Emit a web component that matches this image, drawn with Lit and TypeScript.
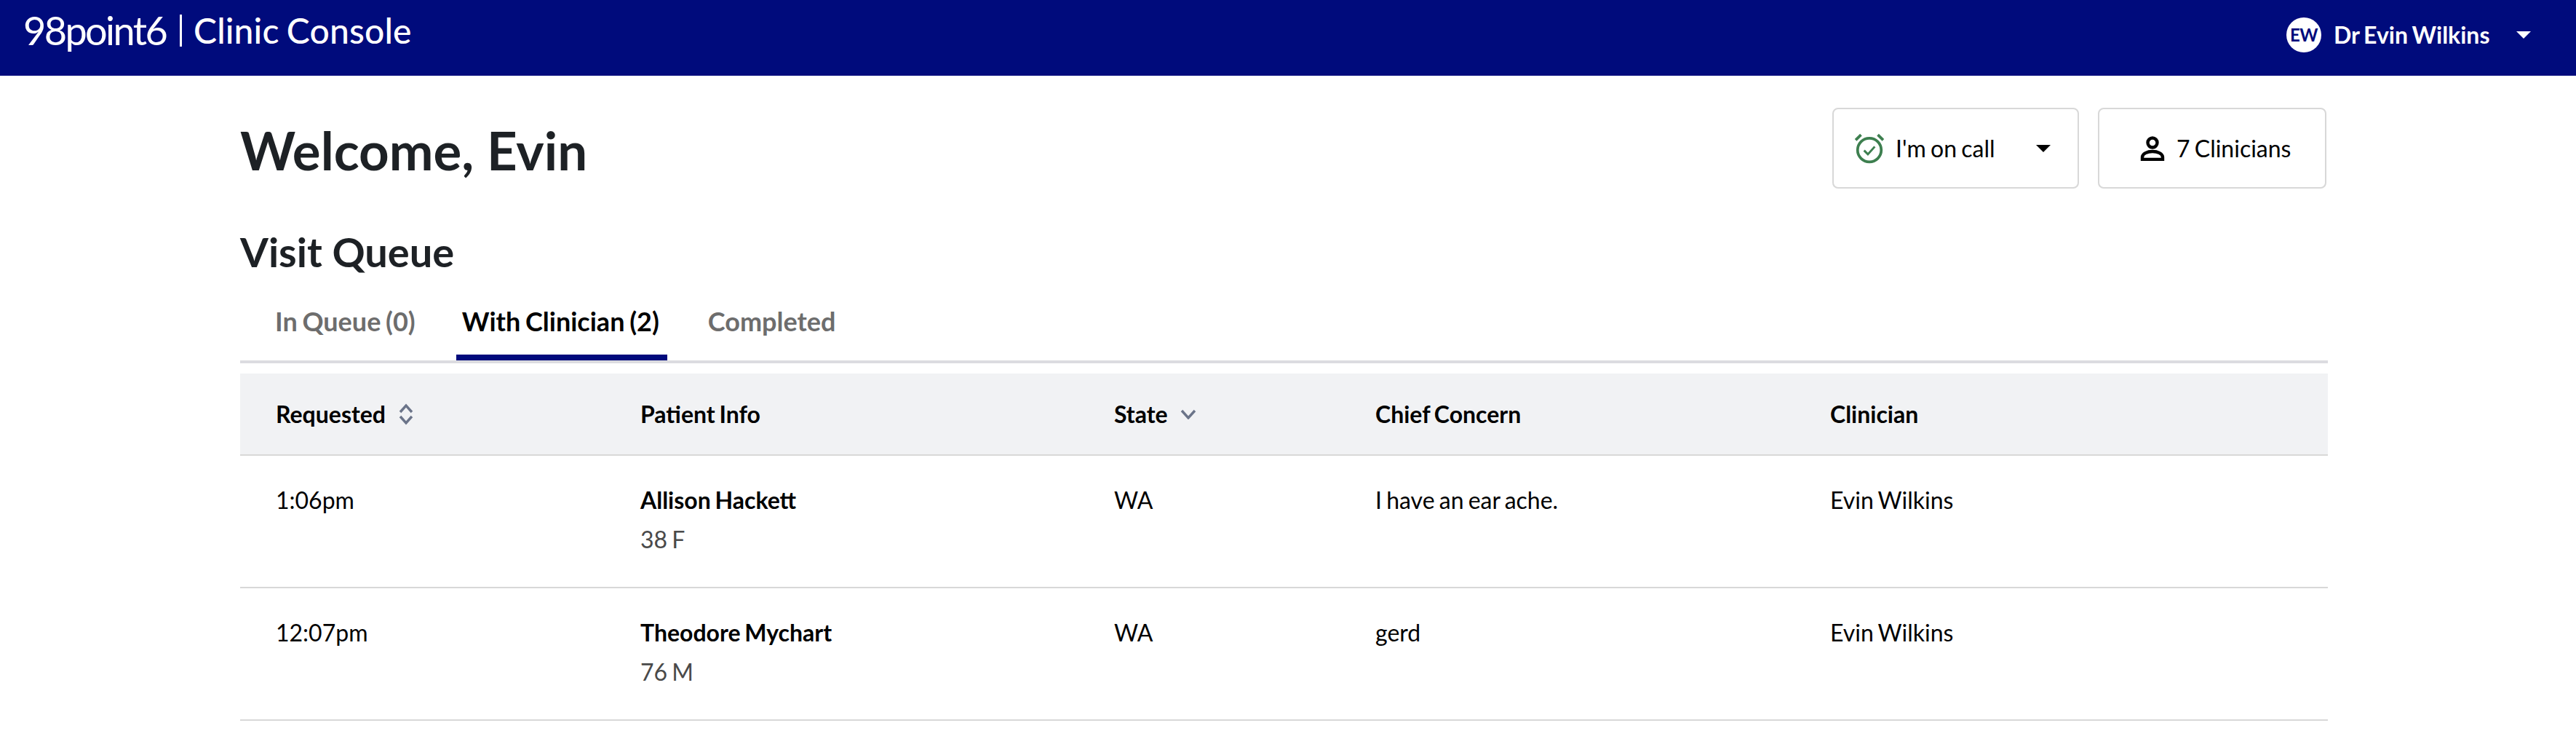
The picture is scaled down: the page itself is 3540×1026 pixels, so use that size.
import { LitElement, html, css, svg } from "lit";
import { customElement } from "lit/decorators.js";

const caret = svg`<path d="M0 0h20L10 10z" fill="currentColor"/>`;

@customElement("app-root")
export class AppRoot extends LitElement {
  static styles = css`
    :host { display: block; font-family: Lato, "Liberation Sans", sans-serif; color: #000; background: #fff; min-height: 1026px; font-size: 32px; line-height: 48px; word-spacing: -2px; }
    .top { height: 104px; background: #000b7c; color: #fff; display: flex; align-items: center; justify-content: space-between; }
    .brand { display: flex; align-items: center; padding-left: 32px; margin-top: -20px; }
    .logo { font-size: 54px; font-weight: 400; letter-spacing: -2.6px; line-height: 56px; width: 196px; }
    .bar { width: 3px; height: 44px; background: #fff; margin: 0 17px 0 19px; }
    .product { font-size: 48px; font-weight: 500; line-height: 56px; letter-spacing: 0.15px; margin-left: -1px; }
    .user { display: flex; align-items: center; padding-right: 62px; font-weight: 700; margin-top: -8px; }
    .avatar { width: 48px; height: 48px; border-radius: 50%; background: #fff; color: #000b7c; font-size: 24px; font-weight: 700; display: flex; align-items: center; justify-content: center; margin-right: 17px; letter-spacing: -0.5px; }
    .name { width: 251px; }
    .user svg { display: block; width: 20px; height: 10px; }
    main { padding: 0 341px 0 330px; }
    .head { display: flex; justify-content: space-between; align-items: center; padding-top: 48px; }
    h1 { margin: 0; font-size: 72.6px; line-height: 96px; font-weight: 700; color: #1d2125; word-spacing: 0; }
    .actions { display: flex; gap: 26px; margin: -4px 2px 0 0; }
    .btn { box-sizing: border-box; height: 111px; border: 2px solid #d8d8d8; border-radius: 8px; display: flex; align-items: center; background: #fff; }
    .oncall { width: 339px; padding-left: 28px; }
    .clin { width: 314px; padding-left: 56px; }
    .oncall .ico { width: 42px; height: 42px; margin-right: 15px; }
    .oncall .lbl { width: 193px; }
    .oncall .car { width: 20px; height: 10px; }
    .clin .ico { width: 34px; height: 34px; margin-right: 16px; }
    h2 { margin: 55px 0 0; font-size: 56px; line-height: 64px; font-weight: 700; color: #1d2125; word-spacing: 0; }
    .tabs { display: flex; border-bottom: 4px solid #dcdce0; margin-top: 29px; height: 88px; font-size: 36px; font-weight: 700; color: #6d6d6d; padding-left: 40px; }
    .tab { padding: 0 8px; margin-right: 48px; height: 88px; box-sizing: border-box; line-height: 69px; }
    .tab.on { color: #000; border-bottom: 8px solid #000b7c; padding-right: 11px; }
    .row { display: grid; grid-template-columns: 501px 651px 359px 625px 1fr; padding-left: 49px; border-bottom: 2px solid #d8d8d8; }
    .row.h { margin-top: 14px; height: 113px; box-sizing: border-box; background: #f1f2f4; font-weight: 700; align-items: center; }
    .row.d { height: 182px; box-sizing: border-box; padding-top: 37px; }
    .hc { display: flex; align-items: center; }
    .hc svg { display: block; margin-left: 17px; }
    .nm { font-weight: 700; }
    .sub { color: #4a4a4a; margin-top: 6px; }
  `;

  render() {
    const rows = [
      ["1:06pm", "Allison Hackett", "38 F", "WA", "I have an ear ache.", "Evin Wilkins"],
      ["12:07pm", "Theodore Mychart", "76 M", "WA", "gerd", "Evin Wilkins"],
    ];
    return html`
      <header class="top">
        <div class="brand">
          <span class="logo">98point6</span><span class="bar"></span><span class="product">Clinic Console</span>
        </div>
        <div class="user">
          <span class="avatar">EW</span><span class="name">Dr Evin Wilkins</span>
          <svg viewBox="0 0 20 10">${caret}</svg>
        </div>
      </header>
      <main>
        <div class="head">
          <h1>Welcome, Evin</h1>
          <div class="actions">
            <div class="btn oncall">
              <svg class="ico" viewBox="0 0 40 40" fill="none" stroke="#3d7f4f">
                <circle cx="20" cy="22" r="15.5" stroke-width="3.6"/>
                <path d="M13 22.5l5 5 9-10" stroke-width="2.8"/>
                <path d="M2 9l7-7M38 9l-7-7" stroke-width="3.6"/>
              </svg>
              <span class="lbl">I'm on call</span>
              <svg class="car" viewBox="0 0 20 10">${caret}</svg>
            </div>
            <div class="btn clin">
              <svg class="ico" viewBox="0 0 34 34" fill="none" stroke="#000" stroke-width="4.4">
                <circle cx="17" cy="9" r="6.5"/>
                <path d="M3 32v-3c0-5 7-8 14-8s14 3 14 8v3z"/>
              </svg>
              <span>7 Clinicians</span>
            </div>
          </div>
        </div>
        <h2>Visit Queue</h2>
        <div class="tabs">
          <div class="tab">In Queue (0)</div>
          <div class="tab on">With Clinician (2)</div>
          <div class="tab">Completed</div>
        </div>
        <div class="row h">
          <div class="hc">Requested
            <svg width="22" height="30" viewBox="0 0 22 30" fill="none" stroke="#6b7489" stroke-width="3.4"><path d="M3 12l8-9 8 9M3 18l8 9 8-9"/></svg>
          </div>
          <div>Patient Info</div>
          <div class="hc">State
            <svg width="22" height="14" viewBox="0 0 22 14" fill="none" stroke="#6b7489" stroke-width="3.4"><path d="M2 2l9 10 9-10"/></svg>
          </div>
          <div>Chief Concern</div>
          <div>Clinician</div>
        </div>
        ${rows.map(
          (r) => html`<div class="row d">
            <div>${r[0]}</div>
            <div><div class="nm">${r[1]}</div><div class="sub">${r[2]}</div></div>
            <div>${r[3]}</div>
            <div>${r[4]}</div>
            <div>${r[5]}</div>
          </div>`
        )}
      </main>
    `;
  }
}
